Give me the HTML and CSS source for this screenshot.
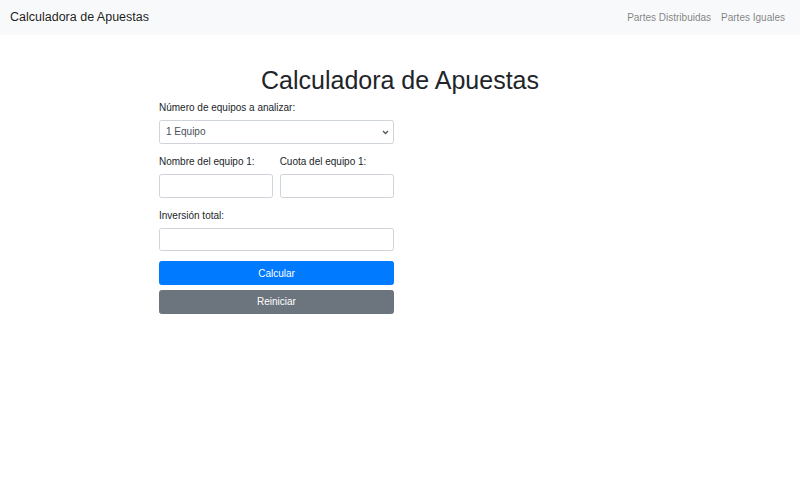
FILE: index.html
```html
<!DOCTYPE html>
<html lang="es">
<head>
<meta charset="utf-8">
<title>Calculadora de Apuestas</title>
<link rel="stylesheet" href="styles.css">
</head>
<body>
<nav class="navbar">
  <a class="brand" href="#">Calculadora de Apuestas</a>
  <ul class="nav-links">
    <li><a href="#">Partes Distribuidas</a></li>
    <li><a href="#">Partes Iguales</a></li>
  </ul>
</nav>
<main class="container">
  <h1 class="title">Calculadora de Apuestas</h1>
  <form class="calc-form">
    <div class="form-group">
      <label class="label" for="equipos">Número de equipos a analizar:</label>
      <div class="select-wrap">
        <select class="control select" id="equipos">
          <option>1 Equipo</option>
          <option>2 Equipos</option>
          <option>3 Equipos</option>
        </select>
        <svg class="chevron" width="7" height="5" viewBox="0 0 7 5"><path d="M1 1 L3.5 3.5 L6 1" fill="none" stroke="#555" stroke-width="1.3"/></svg>
      </div>
    </div>
    <div class="form-group form-row">
      <div class="col">
        <label class="label" for="nombre1">Nombre del equipo 1:</label>
        <input class="control" id="nombre1" type="text">
      </div>
      <div class="col">
        <label class="label" for="cuota1">Cuota del equipo 1:</label>
        <input class="control" id="cuota1" type="text">
      </div>
    </div>
    <div class="form-group">
      <label class="label" for="inversion">Inversión total:</label>
      <input class="control" id="inversion" type="text">
    </div>
    <button class="btn btn-primary" type="button">Calcular</button>
    <button class="btn btn-secondary" type="button">Reiniciar</button>
  </form>
</main>
</body>
</html>
```
FILE: styles.css
```css
* { box-sizing: border-box; }
html, body { margin: 0; padding: 0; }
body {
  font-family: "Liberation Sans", Arial, sans-serif;
  font-size: 10px;
  line-height: 1.5;
  color: #212529;
  background: #fff;
}
.navbar {
  display: flex;
  align-items: center;
  justify-content: space-between;
  height: 35px;
  padding: 0 10px;
  background: #f8f9fa;
}
.brand {
  font-size: 12.5px;
  line-height: 18.75px;
  color: rgba(0,0,0,.9);
  text-decoration: none;
}
.nav-links {
  display: flex;
  list-style: none;
  margin: 0;
  padding: 0;
}
.nav-links a {
  display: block;
  padding: 5px 5px;
  font-size: 10px;
  color: rgba(0,0,0,.5);
  text-decoration: none;
}
.container {
  padding-top: 30px;
}
.title {
  margin: 0 0 5px;
  font-size: 25px;
  font-weight: 500;
  line-height: 30px;
  text-align: center;
}
.calc-form {
  width: 235px;
  margin-left: 159px;
}
.form-group { margin-bottom: 10px; }
.form-row {
  display: flex;
  gap: 6.25px;
}
.col { flex: 1 1 0; min-width: 0; }
.label {
  display: block;
  margin-bottom: 5px;
  line-height: 15px;
}
.control {
  display: block;
  width: 100%;
  height: 23.75px;
  padding: 0 7.5px;
  font-family: inherit;
  font-size: 10px;
  color: #495057;
  background: #fff;
  border: 1px solid #ced4da;
  border-radius: 2.5px;
}
.select-wrap { position: relative; }
.select {
  appearance: none;
  -webkit-appearance: none;
  padding-left: 6px;
}
.chevron {
  position: absolute;
  right: 5px;
  top: 9.5px;
  pointer-events: none;
}
.btn {
  display: block;
  width: 100%;
  height: 23.75px;
  padding: 0;
  font-family: inherit;
  font-size: 10px;
  line-height: 15px;
  color: #fff;
  border: 1px solid transparent;
  border-radius: 2.5px;
}
.btn-primary { background: #007bff; border-color: #007bff; }
.btn-secondary { background: #6c757d; border-color: #6c757d; margin-top: 5px; }
```
